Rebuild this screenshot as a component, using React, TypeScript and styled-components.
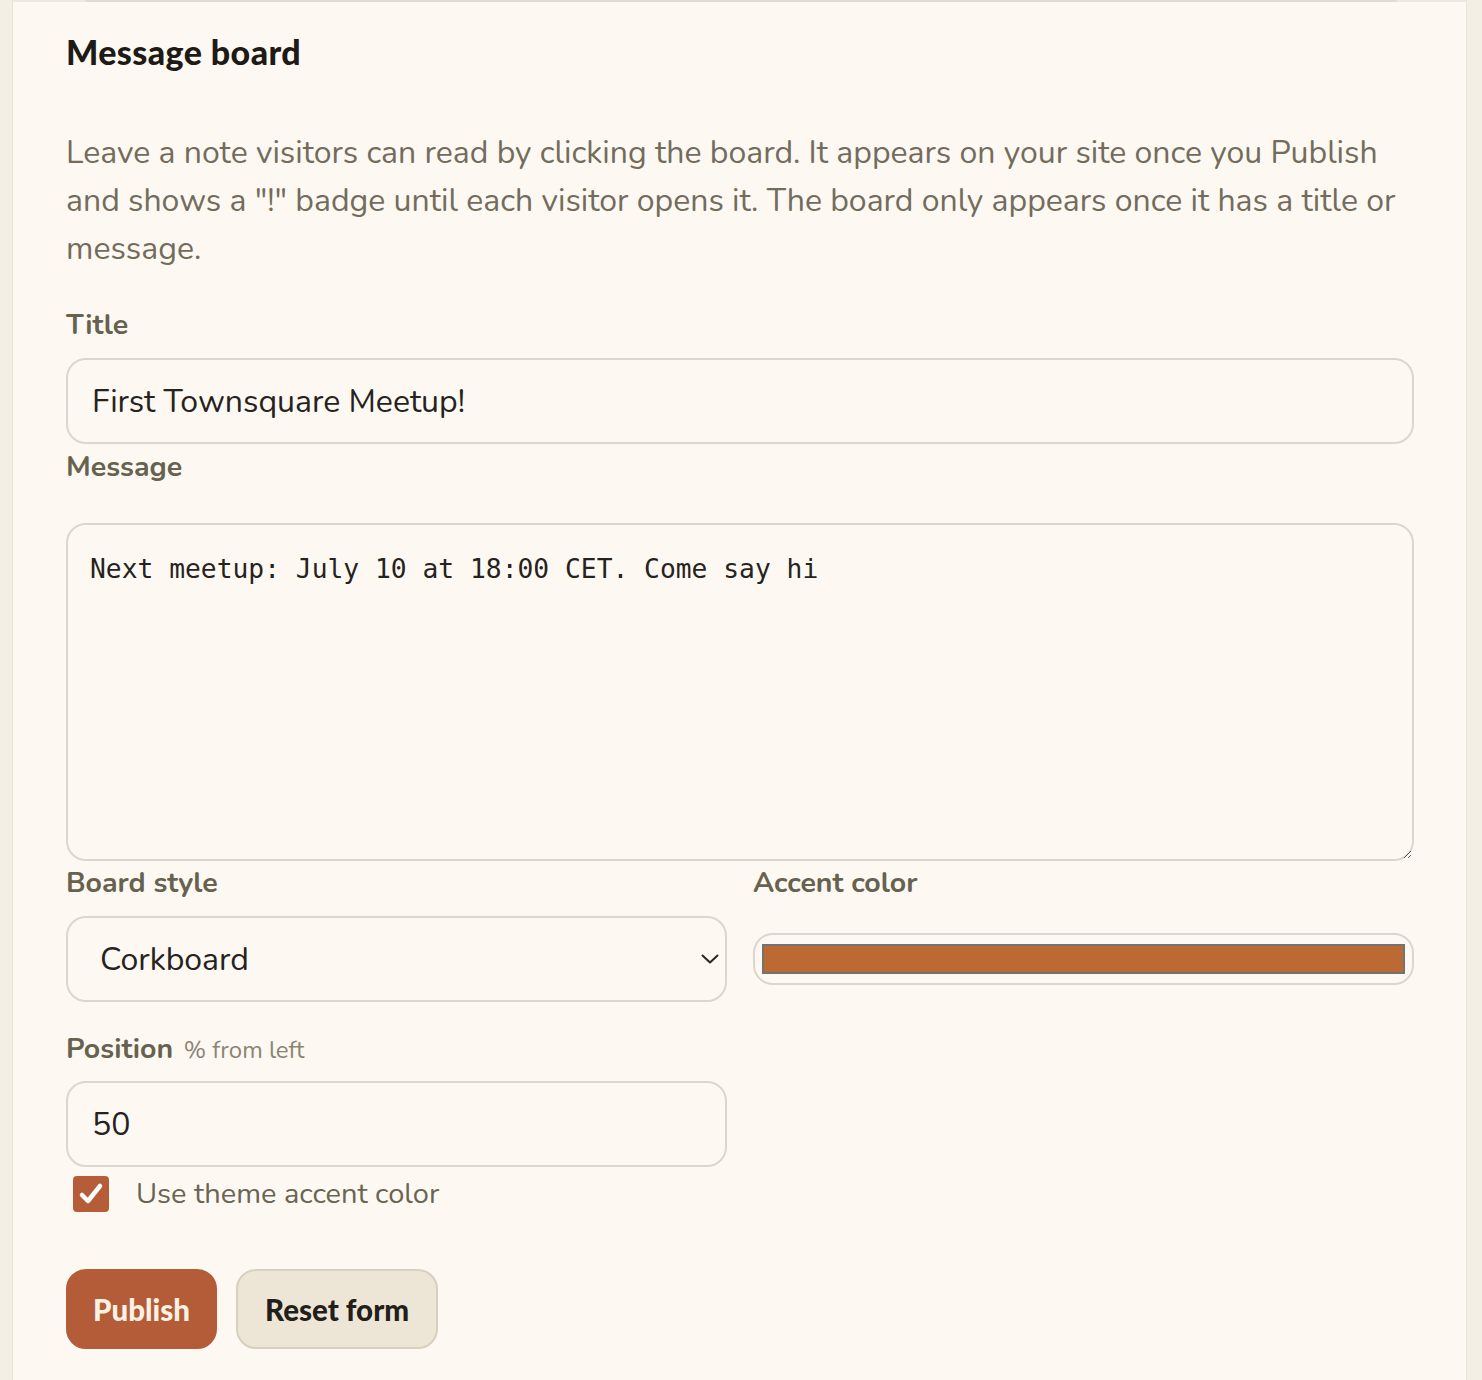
import styled, { createGlobalStyle } from 'styled-components';

const GlobalStyle = createGlobalStyle`
  html, body {
    margin: 0;
    padding: 0;
    background: #f4efe4;
  }
  body {
    font-family: "Nunito", "Lato", "Open Sans", sans-serif;
    -webkit-font-smoothing: antialiased;
  }
`;

const Page = styled.div`
  display: flex;
  min-height: 1380px;
  padding: 0 15px 0 12px;
`;

const Card = styled.section`
  flex: 1;
  display: flex;
  flex-direction: column;
  background: #fdf9f2;
  border-left: 1px solid #e9e3d7;
  border-right: 1px solid #e9e3d7;
  padding: 0 52px 40px 53px;
`;

// bottom edge of the panel sitting above this one
const PrevEdge = styled.div`
  display: flex;
  height: 2px;
  margin: 0 -52px 0 -53px;
  background: #ebe9e6;
`;

const PrevEdgeInner = styled.div`
  flex: 1;
  margin: 0 69px 0 72px;
  background: #dedbd8;
  border-radius: 0 0 4px 4px;
`;

const Heading = styled.h2`
  margin: 28px 0 0;
  font-family: "Lato", sans-serif;
  font-weight: 900;
  font-size: 34px;
  line-height: 44px;
  color: #1e1a16;
  letter-spacing: 0.4px;
`;

const Lead = styled.p`
  margin: 55px 0 0;
  font-size: 32px;
  line-height: 48px;
  color: #736c5d;
`;

const Label = styled.label<{ $gap?: number }>`
  display: block;
  margin-top: ${(p) => p.$gap ?? 0}px;
  font-size: 28.5px;
  line-height: 36px;
  font-weight: 700;
  color: #67614f;
`;

const Hint = styled.span`
  font-size: 24px;
  font-weight: 400;
  color: #8b8474;
  margin-left: 3px;
`;

const fieldBase = `
  box-sizing: border-box;
  width: 100%;
  border: 2px solid #dcd6cc;
  border-radius: 20px;
  background: #fdf9f2;
  color: #26221d;
  outline: none;
`;

const TextInput = styled.input<{ $top?: number }>`
  ${fieldBase}
  display: block;
  height: 86px;
  margin-top: ${(p) => p.$top ?? 15}px;
  padding: 0 24px;
  font-family: "Nunito", "Lato", sans-serif;
  font-size: 32px;
`;

const TextArea = styled.textarea`
  ${fieldBase}
  display: block;
  height: 338px;
  margin-top: 38px;
  padding: 26px 22px;
  resize: vertical;
  font-family: "DejaVu Sans Mono", "Liberation Mono", monospace;
  font-size: 26.3px;
  line-height: 36px;
`;

const TwoCol = styled.div`
  display: grid;
  grid-template-columns: 1fr 1fr;
  column-gap: 26px;
`;

const Col = styled.div`
  display: flex;
  flex-direction: column;
`;

const SelectWrap = styled.div`
  position: relative;
  margin-top: 15px;
`;

const Select = styled.select`
  ${fieldBase}
  appearance: none;
  height: 86px;
  padding: 0 32px;
  font-family: "Nunito", "Lato", sans-serif;
  font-size: 32px;
`;

const Chevron = styled.svg`
  position: absolute;
  right: 8px;
  top: 38px;
  pointer-events: none;
`;

const ColorField = styled.div`
  ${fieldBase}
  height: 52px;
  margin-top: 32px;
  padding: 9px 7px;
`;

const Swatch = styled.div<{ $color: string }>`
  box-sizing: border-box;
  height: 30px;
  background: ${(p) => p.$color};
  border: 2px solid #757370;
`;

const CheckRow = styled.label`
  display: flex;
  align-items: center;
  gap: 27px;
  margin-top: 9px;
  padding-left: 7px;
  font-size: 29px;
  line-height: 36px;
  color: #6a6454;
`;

const CheckBox = styled.span`
  display: flex;
  align-items: center;
  justify-content: center;
  width: 36px;
  height: 36px;
  border-radius: 4px;
  background: #b65c38;
`;

const Actions = styled.div`
  display: flex;
  gap: 19px;
  margin-top: 57px;
`;

const Button = styled.button<{ $primary?: boolean }>`
  height: 80px;
  padding: 0 ${(p) => (p.$primary ? 25 : 27)}px;
  border-radius: 20px;
  font-family: "Lato", sans-serif;
  font-weight: 900;
  font-size: 29.5px;
  border: 2px solid ${(p) => (p.$primary ? '#b35c37' : '#d7cfbf')};
  background: ${(p) => (p.$primary ? '#b35c37' : '#ede6d7')};
  color: ${(p) => (p.$primary ? '#fdf1e4' : '#231f1a')};
`;

export default function App() {
  return (
    <>
      <GlobalStyle />
      <Page>
        <Card>
          <PrevEdge>
            <PrevEdgeInner />
          </PrevEdge>
          <Heading>Message board</Heading>
          <Lead>
            Leave a note visitors can read by clicking the board. It appears on your site once you Publish
            and shows a "!" badge until each visitor opens it. The board only appears once it has a title or
            message.
          </Lead>

          <Label $gap={34}>Title</Label>
          <TextInput defaultValue="First Townsquare Meetup!" />

          <Label $gap={5}>Message</Label>
          <TextArea defaultValue="Next meetup: July 10 at 18:00 CET. Come say hi" />

          <TwoCol>
            <Col>
              <Label $gap={4}>Board style</Label>
              <SelectWrap>
                <Select defaultValue="cork">
                  <option value="cork">Corkboard</option>
                  <option value="chalk">Chalkboard</option>
                </Select>
                <Chevron width="18" height="10" viewBox="0 0 18 10" fill="none">
                  <path d="M1.5 1.5 9 8.5l7.5-7" stroke="#2a2520" strokeWidth="2" strokeLinecap="round" strokeLinejoin="round" />
                </Chevron>
              </SelectWrap>
            </Col>
            <Col>
              <Label $gap={4}>Accent color</Label>
              <ColorField>
                <Swatch $color="#bb6a33" />
              </ColorField>
            </Col>
          </TwoCol>

          <TwoCol>
            <Col>
              <Label $gap={29}>
                Position <Hint>% from left</Hint>
              </Label>
              <TextInput type="text" defaultValue="50" $top={13} />
              <CheckRow>
                <CheckBox>
                  <svg width="26" height="24" viewBox="0 0 26 24" fill="none">
                    <path d="M4 13l6 6L22 4" stroke="#fff" strokeWidth="4.5" strokeLinecap="round" strokeLinejoin="round" />
                  </svg>
                </CheckBox>
                Use theme accent color
              </CheckRow>
            </Col>
          </TwoCol>

          <Actions>
            <Button $primary>Publish</Button>
            <Button>Reset form</Button>
          </Actions>
        </Card>
      </Page>
    </>
  );
}
